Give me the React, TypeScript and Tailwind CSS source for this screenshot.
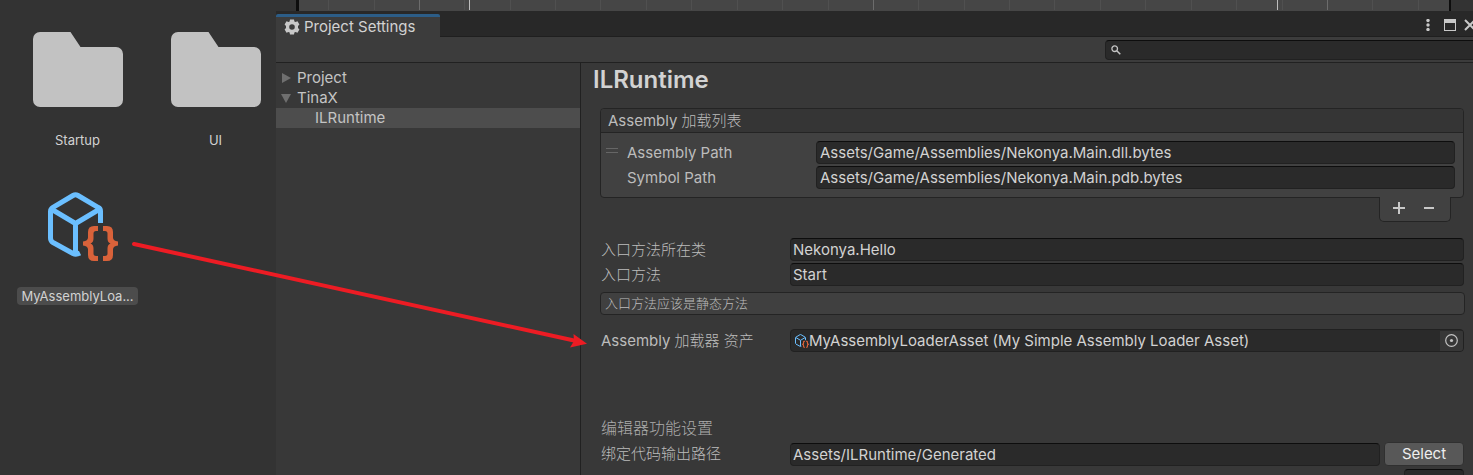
import { useId, type ReactNode } from "react";

const inputBase =
  "block h-[23px] min-w-0 rounded-[4px] border border-[#212121] border-t-[#0d0d0d] bg-[#2a2a2a] text-[#d2d2d2] outline-none";

const rulerMarks = [
  { left: 328, color: "#505050" },
  { left: 374, color: "#505050" },
  { left: 419, color: "#6c6c6c" },
  { left: 464, color: "#505050" },
  { left: 469, color: "#bdbdbd" },
  { left: 510, color: "#505050" },
  { left: 555, color: "#505050" },
  { left: 600, color: "#505050" },
  { left: 646, color: "#505050" },
  { left: 691, color: "#505050" },
  { left: 737, color: "#505050" },
  { left: 782, color: "#505050" },
  { left: 828, color: "#505050" },
  { left: 873, color: "#6c6c6c" },
  { left: 918, color: "#505050" },
  { left: 964, color: "#505050" },
  { left: 1009, color: "#505050" },
  { left: 1054, color: "#505050" },
  { left: 1100, color: "#505050" },
  { left: 1145, color: "#505050" },
  { left: 1191, color: "#505050" },
  { left: 1236, color: "#505050" },
  { left: 1277, color: "#bdbdbd" },
  { left: 1282, color: "#505050" },
  { left: 1327, color: "#6c6c6c" },
  { left: 1372, color: "#505050" },
  { left: 1418, color: "#505050" },
];

function Folder() {
  return (
    <svg className="h-[75px] w-[90px]" viewBox="0 0 90 75" aria-hidden="true">
      <path
        d="M7 0H37.500L47.500 15H83a7 7 0 0 1 7 7V68a7 7 0 0 1-7 7H7a7 7 0 0 1-7-7V7a7 7 0 0 1 7-7Z"
        fill="#c2c2c2"
      />
    </svg>
  );
}

function AssetIcon({ className }: { className: string }) {
  return (
    <svg className={className} viewBox="0 0 70 70" fill="none" aria-hidden="true">
      <g stroke="#6bbfff" strokeWidth="5" strokeLinejoin="round">
        <path d="M52.500 31V19Q52.500 16.500 50 15.400L30 3.500Q27.500 2 25 3.500L5 15.400Q2.500 17 2.500 19.500V46Q2.500 49 5 50.500L25 61.500Q28 63 32 61" />
        <path d="M4 17.500L27.500 31.500L51 17.500M27.500 31.500V60" />
      </g>
      <g fill="#d9623a">
        <path d="M50 34V39H48Q45.500 39 45.500 41.500V46.500Q45.500 50.500 42.500 51.500Q45.500 52.500 45.500 56.500V61.500Q45.500 64 48 64H50V69H46Q40 69 40 63V57.500Q40 54 35 53.500V49.500Q40 49 40 45.500V40Q40 34 46 34Z" />
        <path d="M55 34V39H57Q59.500 39 59.500 41.500V46.500Q59.500 50.500 62.500 51.500Q59.500 52.500 59.500 56.500V61.500Q59.500 64 57 64H55V69H59Q65 69 65 63V57.500Q65 54 70 53.500V49.500Q65 49 65 45.500V40Q65 34 59 34Z" />
      </g>
    </svg>
  );
}

function Tile({ label, selected, children }: { label: string; selected?: boolean; children: ReactNode }) {
  return (
    <button type="button" className="flex w-[121px] flex-col items-center">
      <span className="flex h-[76px] items-center">{children}</span>
      <span
        className={
          selected
            ? "mt-[22px] rounded-[4px] bg-[#4c4c4c] px-1 text-[13px] leading-[18px] text-[#d2d2d2]"
            : "mt-6 px-1 text-[13px] leading-[18px] text-[#d2d2d2]"
        }
      >
        {label}
      </span>
    </button>
  );
}

function PathRow({ label, value, handle }: { label: string; value: string; handle?: boolean }) {
  const id = useId();
  return (
    <div className="flex items-center">
      <span className="flex w-[26px] flex-col gap-[3px] pb-[5px] pl-[5px]">
        {handle && (
          <>
            <span className="h-px w-3 bg-[#666666]" />
            <span className="h-px w-3 bg-[#666666]" />
          </>
        )}
      </span>
      <label htmlFor={id} className="w-[189px]">
        {label}
      </label>
      <input id={id} defaultValue={value} className={`${inputBase} flex-1 px-[3px]`} />
    </div>
  );
}

function Field({ label, value, children }: { label: string; value: string; children?: ReactNode }) {
  const id = useId();
  return (
    <div className="flex items-center">
      <label htmlFor={id} className="w-[189px] shrink-0 font-light">
        {label}
      </label>
      <input id={id} defaultValue={value} className={`${inputBase} flex-1 px-[2px]`} />
      {children}
    </div>
  );
}

function Project() {
  return (
    <aside className="w-[276px] shrink-0 bg-[#333333]">
      <div className="grid grid-cols-[121px_121px] gap-x-[17px] gap-y-10 pt-[31px] pl-[17px]">
        <Tile label="Startup">
          <Folder />
        </Tile>
        <Tile label="UI">
          <Folder />
        </Tile>
        <Tile label="MyAssemblyLoa..." selected>
          <AssetIcon className="ml-[10px] h-[70px] w-[70px]" />
        </Tile>
      </div>
    </aside>
  );
}

function Header() {
  return (
    <header>
      <div className="flex h-[23px] items-stretch bg-[#282828] text-[#c4c4c4]">
        <button
          type="button"
          className="flex w-[164px] items-center gap-1 rounded-t-[2px] border-t-[3px] border-[#2c5d87] bg-[#3c3c3c] pl-2 text-[#d2d2d2]"
        >
          <svg className="h-4 w-4" viewBox="0 0 16 16" fill="#c8c8c8" aria-hidden="true">
            <path
              fillRule="evenodd"
              d="M6 .6h4l.4 2 1 .5 2.100-.9 1.900 3.200-1.400 1.500v2.200l1.400 1.500-1.900 3.200-2.100-.9-1 .5-.4 2H6l-.4-2-1-.5-2.100.9L.6 10.600 2 9.100V6.900L.6 5.400l1.900-3.200 2.100.9 1-.5ZM8 5.200a2.800 2.800 0 1 0 0 5.600 2.800 2.800 0 0 0 0-5.600Z"
            />
          </svg>
          Project Settings
        </button>
        <div className="flex flex-1 items-center justify-end gap-[10px] overflow-hidden border-b border-[#1f1f1f] pb-px">
          <button type="button" aria-label="More" className="flex w-3 justify-center">
            <svg className="h-3 w-1" viewBox="0 0 4 12" fill="#c8c8c8" aria-hidden="true">
              <circle cx="2" cy="1.500" r="1.700" />
              <circle cx="2" cy="6" r="1.700" />
              <circle cx="2" cy="10.500" r="1.700" />
            </svg>
          </button>
          <button type="button" aria-label="Maximize">
            <svg className="h-3 w-3" viewBox="0 0 12 12" aria-hidden="true">
              <path fillRule="evenodd" fill="#c8c8c8" d="M0 0H12V12H0ZM1 4V11H11V4Z" />
            </svg>
          </button>
          <button type="button" aria-label="Close" className="-mr-[3px] -ml-[2px]">
            <svg className="h-3 w-3" viewBox="0 0 12 12" aria-hidden="true">
              <path d="M1 1L11 11M11 1L1 11" stroke="#c8c8c8" strokeWidth="2" />
            </svg>
          </button>
        </div>
      </div>
      <div className="flex h-[25px] items-center justify-end bg-[#3c3c3c]">
        <label className="-mr-3 flex h-5 w-[380px] items-center rounded-[4px] border border-[#212121] border-t-[#0d0d0d] bg-[#2a2a2a] pl-[5px]">
          <svg className="h-[10px] w-[10px]" viewBox="0 0 10 10" fill="none" stroke="#c4c4c4" aria-hidden="true">
            <circle cx="3.700" cy="3.700" r="2.800" strokeWidth="1.300" />
            <path d="M5.800 5.800L9.300 9.300" strokeWidth="1.500" />
          </svg>
          <input aria-label="Search" className="min-w-0 flex-1 bg-transparent outline-none" />
        </label>
      </div>
    </header>
  );
}

function Tree() {
  return (
    <nav className="w-[305px] shrink-0 border-r border-[#212121] pt-[5px] text-[#c4c4c4]">
      <a href="#project" className="flex h-5 items-center pl-[6px]">
        <svg className="mr-[5px] h-[10px] w-[10px]" viewBox="0 0 10 10" aria-hidden="true">
          <path d="M0 0L9 5L0 10Z" fill="#6f6f6f" />
        </svg>
        Project
      </a>
      <a href="#tinax" className="flex h-5 items-center pl-[5px]">
        <svg className="mr-[6px] h-[10px] w-[10px]" viewBox="0 0 10 10" aria-hidden="true">
          <path d="M0 1H10L5 10Z" fill="#6f6f6f" />
        </svg>
        TinaX
      </a>
      <a href="#ilruntime" className="flex h-5 items-center bg-[#4d4d4d] pl-[39px]">
        ILRuntime
      </a>
    </nav>
  );
}

function Settings() {
  return (
    <main className="min-w-0 flex-1 pr-[9px] pl-3 text-[#bcbcbc]">
      <h1 className="pt-[2px] text-2xl leading-[30px] font-semibold text-[#d2d2d2]">ILRuntime</h1>
      <div className="pl-2">
        <section className="mt-[13px] -ml-px rounded-[4px] border border-[#242424] bg-[#414141]">
          <h2 className="h-6 rounded-t-[4px] border-b border-[#242424] bg-[#353535] pl-[7px] leading-6">
            Assembly <span className="font-light">加载列表</span>
          </h2>
          <div className="flex flex-col gap-[2px] py-2 pr-2">
            <PathRow label="Assembly Path" value="Assets/Game/Assemblies/Nekonya.Main.dll.bytes" handle />
            <PathRow label="Symbol Path" value="Assets/Game/Assemblies/Nekonya.Main.pdb.bytes" />
          </div>
        </section>
        <div className="-mt-px flex justify-end pr-[13px]">
          <div className="flex h-[25px] w-[72px] items-center justify-around rounded-b-[5px] border border-t-0 border-[#242424] bg-[#414141] pr-[6px] pb-[2px] pl-[3px]">
            <button type="button" aria-label="Add">
              <svg className="h-3 w-3" viewBox="0 0 12 12" aria-hidden="true">
                <path d="M0 6H12M6 0V12" stroke="#c8c8c8" strokeWidth="2" />
              </svg>
            </button>
            <button type="button" aria-label="Remove">
              <svg className="h-3 w-[10px]" viewBox="0 0 10 12" aria-hidden="true">
                <path d="M0 6H10" stroke="#c8c8c8" strokeWidth="2" />
              </svg>
            </button>
          </div>
        </div>
        <div className="mt-4 flex flex-col gap-[2px]">
          <Field label="入口方法所在类" value="Nekonya.Hello" />
          <Field label="入口方法" value="Start" />
        </div>
        <p className="mt-[6px] -mr-px -ml-px h-[23px] rounded-[4px] border border-[#242424] bg-[#404040] pl-1 text-[13px] leading-5 font-light">
          入口方法应该是静态方法
        </p>
        <div className="mt-[14px] flex items-center">
          <span className="w-[189px] shrink-0">
            Assembly <span className="font-light">加载器 资产</span>
          </span>
          <div className="flex h-[23px] min-w-0 flex-1 items-center overflow-hidden rounded-[4px] border border-[#212121] bg-[#2a2a2a] pl-1 text-[#d2d2d2]">
            <AssetIcon className="h-[14px] w-[14px]" />
            <span className="flex-1">MyAssemblyLoaderAsset (My Simple Assembly Loader Asset)</span>
            <button
              type="button"
              aria-label="Pick asset"
              className="flex h-5 w-[23px] items-center justify-center bg-[#373737]"
            >
              <svg className="h-[13px] w-[13px]" viewBox="0 0 13 13" aria-hidden="true">
                <circle cx="6.500" cy="6.500" r="5.800" fill="none" stroke="#c4c4c4" strokeWidth="1.200" />
                <circle cx="6.500" cy="6.500" r="1.600" fill="#c4c4c4" />
              </svg>
            </button>
          </div>
        </div>
        <h2 className="mt-[62px] text-base leading-7 font-light text-[#acacac]">编辑器功能设置</h2>
        <Field label="绑定代码输出路径" value="Assets/ILRuntime/Generated">
          <button
            type="button"
            className="ml-1 h-6 w-20 rounded-[4px] border border-[#303030] bg-[#585858] leading-5 text-[#eeeeee]"
          >
            Select
          </button>
        </Field>
        <div className="mt-[3px] flex items-start justify-between pl-[97px]">
          <label htmlFor="editor-mode" className="pt-1">
            编辑器加载模式
          </label>
          <input id="editor-mode" className={`${inputBase} w-[60px]`} />
        </div>
      </div>
    </main>
  );
}

export default function App() {
  return (
    <div className="relative flex h-screen overflow-hidden bg-[#333333] font-['Inter','Noto_Sans_CJK_SC',sans-serif] text-[15px] leading-5">
      <Project />
      <div className="flex min-w-0 flex-1 flex-col bg-[#383838]">
        <div className="h-[11px] shrink-0 bg-[#333333] pr-[22px] pl-5">
          <div className="h-full border-r-2 border-l-[3px] border-[#0d0d0d] bg-[#464646]" />
        </div>
        <div className="h-[3px] shrink-0 bg-[#282828]" />
        <Header />
        <div className="flex min-h-0 flex-1 border-t border-[#212121]">
          <Tree />
          <Settings />
        </div>
      </div>
      {rulerMarks.map((m) => (
        <span key={m.left} className="absolute top-0 h-[10px] w-px" style={{ left: m.left, background: m.color }} />
      ))}
      <svg className="pointer-events-none absolute top-[230px] left-[120px] h-[130px] w-[480px]" viewBox="0 0 480 130" aria-hidden="true">
        <path d="M14 14L454 110.500" stroke="#ed1c24" strokeWidth="4" strokeLinecap="round" />
        <path d="M467 113.700L450 117.500L454 111L453.500 104Z" fill="#ed1c24" />
      </svg>
    </div>
  );
}
